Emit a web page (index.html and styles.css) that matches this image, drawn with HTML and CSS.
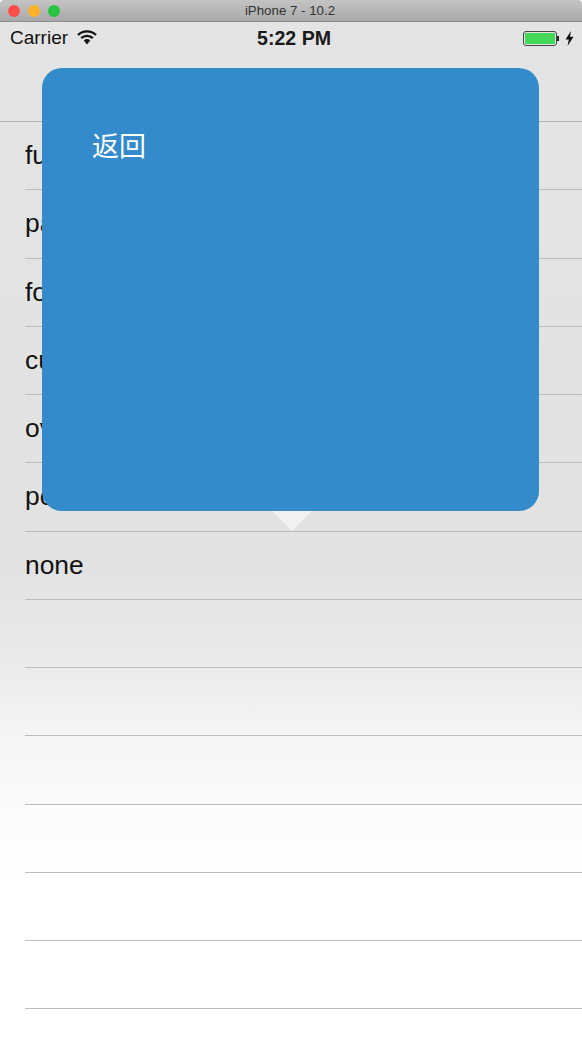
FILE: index.html
```html
<!DOCTYPE html>
<html lang="en">
<head>
    <meta charset="UTF-8">
    <meta name="viewport" content="width=device-width, initial-scale=1.0">
    <title>iPhone 7 - 10.2</title>
    <link rel="stylesheet" href="styles.css">
</head>
<body>

<!-- Simulator window bar -->
<div class="titlebar">
    <div class="lights">
        <span class="light red"></span>
        <span class="light yellow"></span>
        <span class="light green"></span>
    </div>
    <div class="window-title">iPhone 7 - 10.2</div>
</div>

<div class="screen">
    <!-- Status bar -->
    <div class="statusbar">
        <div class="status-left">
            <span>Carrier</span>
            <svg class="wifi" width="20" height="15" viewBox="0 0 20 15">
                <path d="M1 5 A13 13 0 0 1 19 5" fill="none" stroke="#111" stroke-width="2.4"/>
                <path d="M4.2 8.2 A8.4 8.4 0 0 1 15.8 8.2" fill="none" stroke="#111" stroke-width="2.4"/>
                <path d="M6.8 10.4 A5 5 0 0 1 13.2 10.4 L10 14.5 Z" fill="#111"/>
            </svg>
        </div>
        <div class="status-time">5:22 PM</div>
        <div class="status-right">
            <div class="battery"><div class="battery-fill"></div></div>
            <div class="battery-tip"></div>
            <svg class="bolt" width="9" height="15" viewBox="0 0 9 15">
                <path d="M6 0 L0.5 8.5 L3.8 8.5 L2.6 15 L8.5 5.8 L5 5.8 Z" fill="#111"/>
            </svg>
        </div>
    </div>

    <div class="navbar"></div>

    <!-- Table rows -->
    <div class="list">
        <div class="row">fullScreen</div>
        <div class="row">pageSheet</div>
        <div class="row">formSheet</div>
        <div class="row">currentContext</div>
        <div class="row">overFullScreen</div>
        <div class="row">popover</div>
        <div class="row">none</div>
        <div class="row"></div>
        <div class="row"></div>
        <div class="row"></div>
        <div class="row"></div>
        <div class="row"></div>
        <div class="row"></div>
    </div>
</div>

<!-- Popover -->
<div class="popover">
    <div class="back-btn">返回</div>
</div>
<div class="popover-arrow"></div>

</body>
</html>
```

FILE: styles.css
```css
body {
    margin: 0;
    width: 582px;
    height: 1057px;
    overflow: hidden;
    position: relative;
    font-family: "Liberation Sans", Arial, sans-serif;
    color: #111;
    background-color: #fff;
}

/* Window bar */
.titlebar {
    height: 21px;
    border-bottom: 1px solid #8e8e8e;
    background: linear-gradient(#c4c4c4, #a9a9a9);
    border-radius: 4px 4px 0 0;
    display: flex;
    align-items: center;
    position: relative;
}
.lights {
    display: flex;
    gap: 8px;
    padding-left: 8px;
}
.light {
    width: 12px;
    height: 12px;
    border-radius: 50%;
}
.red { background-color: #fc4f4a; }
.yellow { background-color: #fdb22a; }
.green { background-color: #28c33f; }
.window-title {
    flex: 1;
    margin-right: 62px;
    text-align: center;
    font-size: 13.3px;
    color: #333;
}

/* Phone screen */
.screen {
    background: linear-gradient(#e4e4e4 0, #e2e2e2 545px, #ebebeb 645px, #f5f5f5 713px, #fbfbfb 781px, #fff 860px);
    height: 1035px;
}
.statusbar {
    height: 32px;
    display: flex;
    align-items: center;
    justify-content: space-between;
    padding: 0 8px 0 10px;
    position: relative;
}
.status-left {
    display: flex;
    align-items: center;
    gap: 9px;
    font-size: 19px;
}
.wifi {
    margin-top: -2px;
}
.status-time {
    position: absolute;
    left: 257px;
    font-size: 19.6px;
    font-weight: bold;
    color: #1a1a1a;
}
.status-right {
    display: flex;
    align-items: center;
}
.battery {
    width: 34px;
    height: 15px;
    box-sizing: border-box;
    border: 1px solid #444;
    border-radius: 3px;
    padding: 1px;
}
.battery-fill {
    height: 100%;
    background-color: #44d85b;
}
.battery-tip {
    width: 2px;
    height: 5px;
    background-color: #222;
    margin-right: 6px;
}
.navbar {
    height: 67px;
    border-bottom: 1px solid #b4b4b4;
}

/* Rows */
.list {
    display: flex;
    flex-direction: column;
}
.row {
    height: 67.25px;
    margin-left: 25px;
    border-bottom: 1px solid #bcbcbc;
    display: flex;
    align-items: center;
    font-size: 26.4px;
    color: #111;
}

/* Popover */
.popover {
    position: absolute;
    left: 42px;
    top: 68px;
    width: 496.5px;
    height: 443px;
    box-sizing: border-box;
    padding: 60px 50px;
    background-color: #348bcb;
    border-radius: 20px;
}
.back-btn {
    font-family: "Noto Sans CJK SC", sans-serif;
    font-size: 27px;
    line-height: 34px;
    color: #fff;
}
.popover-arrow {
    position: absolute;
    left: 272px;
    top: 511px;
    width: 0;
    height: 0;
    border-left: 20px solid transparent;
    border-right: 20px solid transparent;
    border-top: 20px solid #f1f2f3;
}
```
